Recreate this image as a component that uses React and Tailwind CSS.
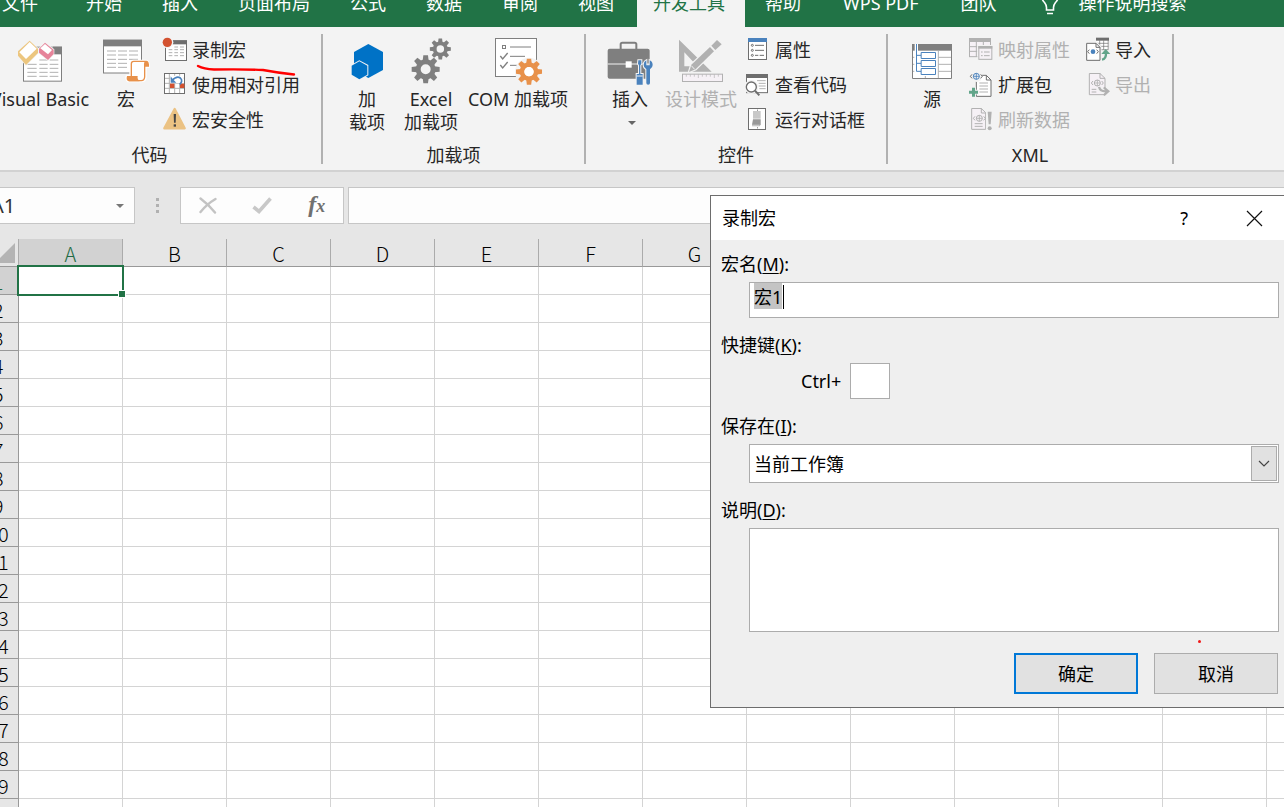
import { useEffect, useRef } from "react";

const GRAY = "#7f7f7f";
const DARK = "#6e6e6e";
const DIM = "#b1b1b1";
const BLUE = "#4a82bd";

function Svg({ w, h, box, children }) {
  return (
    <svg width={w} height={h} viewBox={box} fill="none" className="shrink-0" aria-hidden="true">
      {children}
    </svg>
  );
}

function Small({ children }) {
  return (
    <Svg w={26} h={25} box="0 0 78 75">
      {children}
    </Svg>
  );
}

/* ---------- ribbon icons ---------- */

function VisualBasicIcon() {
  return (
    <Svg w={46} h={43} box="0 0 138 129">
      <rect x="19.5" y="21.5" width="114" height="102" fill="#fff" stroke={GRAY} strokeWidth="3" />
      <rect x="108" y="20" width="27" height="23" fill={GRAY} />
      <path d="M67 60h25M98 60h26M31 73h28M67 73h25M98 73h26M31 85h28M67 85h25M98 85h26M31 97h28M67 97h25M98 97h26M31 109h28M67 109h25M98 109h26" stroke={DIM} strokeWidth="3" />
      <path d="M38 2L63 26V39L27 75L3 47V34Z" fill="#ecc67f" stroke="#f3f3f3" strokeWidth="4" paintOrder="stroke" />
      <path d="M38 6L59 26L27 57L7 37Z" fill="#fff" />
      <path d="M84 8L110 29V42L93 60L66 38V26Z" fill="#e6849a" stroke="#f3f3f3" strokeWidth="4" paintOrder="stroke" />
      <path d="M84 12L105 30L93 43L70 25Z" fill="#fff" />
    </Svg>
  );
}

function MacroIcon() {
  return (
    <Svg w={48} h={44} box="0 0 144 132">
      <rect x="4.500" y="4" width="114" height="98" fill="#fff" stroke={GRAY} strokeWidth="3" />
      <rect x="3" y="2" width="117" height="20" fill={GRAY} />
      <path d="M15 36h27M48 36h27M81 36h27M15 48h27M48 48h27M81 48h27M15 61h27M48 61h27M81 61h27M15 73h27M48 73h27M15 85h27M48 85h27" stroke={DIM} strokeWidth="3" />
      <path d="M86 113V72Q86 66 94 66H133Q140 67 139 83H130V116Q129 126 118 126H78Q72 120 75 111H86Z" fill="#fff" stroke="#fff" strokeWidth="8" />
      <path d="M88 112V74Q88 67 95 67H133Q127 70 128 80V114Q127 125 118 125H80" stroke="#e8914a" strokeWidth="4" />
      <path d="M128 83V73Q128 65 135 65Q142 68 141 83Z" fill="#e8914a" />
      <path d="M75 111H107Q105 121 113 127H81Q71 125 75 111Z" fill="#e8914a" />
    </Svg>
  );
}

function RecordIcon() {
  return (
    <Small>
      <rect x="10.500" y="11.500" width="63" height="59" fill="#fff" stroke={DARK} strokeWidth="3" />
      <rect x="31" y="10" width="44" height="12" fill={DARK} />
      <path d="M20 38h11M37 38h11M54 38h12M37 30h11M54 30h12M20 47h11M37 47h11M54 47h12M20 56h11M37 56h11M54 56h12" stroke={DIM} strokeWidth="3" />
      <circle cx="16" cy="16" r="18" fill="#f3f3f3" />
      <circle cx="16" cy="16" r="14" fill="#d35230" />
    </Small>
  );
}

function RelativeIcon() {
  return (
    <Small>
      <rect x="7.500" y="4.500" width="60" height="60" fill="#fff" />
      <path d="M22 5V64M38 5V64M53 5V64M8 19H67M8 34H67M8 49H67" stroke={DIM} strokeWidth="3" />
      <rect x="7.500" y="4.500" width="60" height="60" stroke={DARK} strokeWidth="3" />
      <path d="M26 11H58L66 20V34H24Z" fill="#fff" />
      <rect x="24" y="35" width="13" height="13" fill="#d35230" />
      <rect x="54" y="35" width="13" height="13" fill="#d35230" />
      <path d="M30 25Q45 10 55 18Q64 27 53 37" stroke={BLUE} strokeWidth="5" />
      <path d="M26 13V32H43L38 27L32 21Z" fill={BLUE} />
    </Small>
  );
}

function WarningIcon() {
  return (
    <Small>
      <path d="M38 6L68 64H7Z" fill="#ebc283" stroke="#ebc283" strokeWidth="7" strokeLinejoin="round" />
      <path d="M35 21H42L41 47H36Z" fill="#444" />
      <rect x="35" y="52" width="7" height="7" fill="#444" />
    </Small>
  );
}

function AddInIcon() {
  return (
    <Svg w={33} h={37} box="0 0 99 111">
      <path d="M52 3L96 27V81L52 105L9 81V27Z" fill="#0072c6" />
      <path d="M25 55L49 68V95L25 109L2 95V68Z" fill="#0072c6" stroke="#f3f3f3" strokeWidth="6" paintOrder="stroke" />
    </Svg>
  );
}

const TEETH = [0, 45, 90, 135, 180, 225, 270, 315];

function Gear({ cx, cy, s, fill, halo }) {
  return (
    <g transform={`translate(${cx} ${cy}) scale(${s})`}>
      {halo && <circle r="45" fill="#f3f3f3" />}
      {TEETH.map((a) => (
        <path key={a} d="M-9 -26L-7 -42H7L9 -26Z" fill={fill} transform={`rotate(${a})`} />
      ))}
      <circle r="22.500" stroke={fill} strokeWidth="15" />
      {halo && <circle r="15" fill="#fff" />}
    </g>
  );
}

function ExcelAddInIcon() {
  return (
    <Svg w={41} h={46} box="0 0 123 138">
      <Gear cx={44} cy={94} s={1} fill={GRAY} />
      <Gear cx={88} cy={33} s={0.75} fill={GRAY} />
    </Svg>
  );
}

function ComIcon() {
  return (
    <Svg w={49} h={48} box="0 0 147 144">
      <rect x="4.500" y="4.500" width="123" height="114" fill="#fff" stroke={GRAY} strokeWidth="3" />
      <rect x="25.500" y="25.500" width="9" height="9" stroke={GRAY} strokeWidth="3" />
      <path d="M48 30H111M48 58H93M48 85H70" stroke={GRAY} strokeWidth="3" />
      <path d="M19 57L26 66L41 48M19 84L26 93L41 75" stroke={GRAY} strokeWidth="4" />
      <Gear cx={105} cy={104} s={0.93} fill="#e8914a" halo />
    </Svg>
  );
}

function InsertIcon() {
  return (
    <Svg w={47} h={50} box="0 -15 141 150">
      <path d="M41 24V10Q41 5 46 5H83Q88 5 88 10V24" stroke={GRAY} strokeWidth="6" />
      <rect x="2" y="23" width="126" height="90" rx="6" fill={GRAY} />
      <path d="M2 69H128" stroke="#f3f3f3" strokeWidth="3" />
      <rect x="56" y="61" width="18" height="19" fill="#fff" />
      <path d="M94 58h9v10l-3 5v26h7v32h-18v-32h7v-26l-3-5z" fill={BLUE} stroke="#f3f3f3" strokeWidth="6" paintOrder="stroke" />
      <path d="M89 105H107" stroke="#f3f3f3" strokeWidth="3" />
      <path d="M118 58V73H128V58Q137 62 137 72Q137 80 129 85V126Q129 131 123.500 131Q118 131 118 126V85Q110 80 110 72Q110 62 118 58Z" fill={BLUE} stroke="#f3f3f3" strokeWidth="6" paintOrder="stroke" />
    </Svg>
  );
}

function DesignIcon() {
  return (
    <Svg w={46} h={44} box="0 0 138 132">
      <path d="M3 2V98H101ZM19 40L58 82H19Z" fill={DIM} fillRule="evenodd" />
      <path d="M33 99L40 77L96 24L108 37L53 91Z" fill={DIM} stroke="#f3f3f3" strokeWidth="7" paintOrder="stroke" />
      <path d="M100 20L117 3L131 16L112 33Z" fill={DIM} stroke="#f3f3f3" strokeWidth="5" paintOrder="stroke" />
      <path d="M40 80L50 91" stroke="#f3f3f3" strokeWidth="3" />
      <rect x="13.500" y="105.500" width="120" height="22" fill="#f6f1f6" stroke={DIM} strokeWidth="3" />
      <path d="M25 106v7M37 106v7M49 106v7M61 106v11M73 106v7M85 106v7M97 106v7M109 106v11M121 106v7" stroke={DIM} strokeWidth="2" />
    </Svg>
  );
}

function PropertiesIcon() {
  return (
    <Small>
      <rect x="10.500" y="4.500" width="54" height="63" fill="#fff" stroke={DARK} strokeWidth="3" />
      <rect x="9" y="3" width="57" height="12" fill={BLUE} />
      <g stroke={DARK} strokeWidth="3">
        <circle cx="22" cy="25" r="3" />
        <circle cx="22" cy="40" r="3" />
        <circle cx="22" cy="55" r="3" />
        <path d="M30 25H57M30 40H57M30 55H40M44 55H57" />
      </g>
    </Small>
  );
}

function ViewCodeIcon() {
  return (
    <Small>
      <rect x="4.500" y="8" width="63" height="54" fill="#fff" stroke={DARK} strokeWidth="3" />
      <rect x="3" y="6" width="66" height="12" fill={DARK} />
      <path d="M36 26H62M41 34H62M41 42H62M43 50H62" stroke={DIM} strokeWidth="3" />
      <circle cx="19" cy="45" r="21" fill="#f3f3f3" />
      <path d="M30 56L43 70" stroke={DARK} strokeWidth="6" />
      <circle cx="19" cy="45" r="15" fill="#fff" stroke={DARK} strokeWidth="4" />
    </Small>
  );
}

function RunDialogIcon() {
  return (
    <Small>
      <rect x="10.500" y="4.500" width="51" height="63" fill="#fff" stroke={DARK} strokeWidth="3" />
      <rect x="24" y="12" width="23" height="23" fill="#c8c8c8" />
      <path d="M24 37H47V53L44 57H21V53Z" fill="#999" />
      <rect x="21" y="53" width="23" height="5" fill="#c8c8c8" />
      <rect x="36" y="8" width="3" height="3" fill={DARK} />
      <rect x="36" y="61" width="3" height="3" fill={DARK} />
    </Small>
  );
}

function SourceIcon() {
  return (
    <Svg w={42} h={37} box="0 0 126 111">
      <rect x="4.500" y="4" width="117" height="103" fill="#fff" />
      <path d="M82 24V106M82 43H121M82 64H121M82 85H121M43 99V106M4 43H10M4 64H10M4 85H10" stroke={DIM} strokeWidth="3" />
      <path d="M4.500 3V106.500H121.500V3" stroke={GRAY} strokeWidth="3" />
      <rect x="3" y="3" width="120" height="20" fill={GRAY} />
      <rect x="11" y="3" width="10" height="21" fill="#fff" />
      <path d="M16.500 3V85H30M16.500 37H30M16.500 61H30" stroke={BLUE} strokeWidth="3" />
      <path d="M30.500 28.500h43v18h-43zM30.500 52.500h43v18h-43zM30.500 76.500h43v18h-43z" stroke={BLUE} strokeWidth="3" fill="#fff" />
    </Svg>
  );
}

function MapIcon() {
  return (
    <Small>
      <rect x="4.500" y="5" width="63" height="54" fill="#f6f1f6" stroke={DIM} strokeWidth="3" />
      <path d="M25 12V59M46 12V28M4 29H28M4 43H28" stroke={DIM} strokeWidth="3" />
      <rect x="3" y="3" width="66" height="12" fill={DIM} />
      <rect x="28" y="24" width="46" height="46" fill="#f3f3f3" />
      <rect x="32.500" y="29" width="39" height="38" fill="#f6f1f6" stroke={DIM} strokeWidth="3" />
      <rect x="31" y="27" width="42" height="8" fill={DIM} />
      <path d="M39 45h5M48 45h17M39 56h5M48 56h17" stroke={DIM} strokeWidth="3" />
    </Small>
  );
}

function Globe({ cx, cy, color, edge }) {
  return (
    <g transform={`translate(${cx} ${cy})`}>
      <circle r="9" stroke={color} strokeWidth="3" />
      <path d="M-9 0H9M0 -9V9" stroke={color} strokeWidth="2.500" />
      <path d="M-13 -6L-18 0L-13 6M13 -6L18 0L13 6" stroke={edge} strokeWidth="3" />
    </g>
  );
}

function ExpansionIcon() {
  return (
    <Svg w={26} h={26} box="0 0 78 78">
      <path d="M25 10H55L69 24V73H25Z" fill="#fff" stroke={DARK} strokeWidth="3" />
      <path d="M55 10V24H69" stroke={DARK} strokeWidth="3" />
      <path d="M34 33H60M34 42H60M34 51H60M34 60H60" stroke={DIM} strokeWidth="3" />
      <circle cx="26" cy="13" r="17" fill="#f3f3f3" />
      <Globe cx={25} cy={13} color={BLUE} edge={DARK} />
      <path d="M12 47H21V56H30V65H21V74H12V65H3V56H12Z" fill="#62a58a" stroke="#f3f3f3" strokeWidth="5" paintOrder="stroke" />
    </Svg>
  );
}

function RefreshIcon() {
  return (
    <Small>
      <path d="M11 4.500H40L53 17V67H11Z" fill="#f6f1f6" stroke={DIM} strokeWidth="3" />
      <path d="M40 4V18H53" stroke={DIM} strokeWidth="3" />
      <Globe cx={34} cy={34} color={DIM} edge={DIM} />
      <path d="M20 50H44M20 58H44" stroke={DIM} strokeWidth="3" />
      <rect x="54" y="10" width="20" height="62" fill="#f3f3f3" />
      <path d="M59 14H71L68 52H62Z" fill={DIM} />
      <circle cx="65" cy="64" r="6" fill={DIM} />
    </Small>
  );
}

function ImportIcon() {
  return (
    <Small>
      <rect x="34" y="3" width="36" height="36" fill="#fff" />
      <path d="M44 10V38M56 10V38M69.500 4V38M34 19H70M34 28H70M34 38H70" stroke={DARK} strokeWidth="2" />
      <rect x="33" y="2" width="39" height="9" fill={DARK} />
      <path d="M5 19H33L45 31V70H5Z" fill="#fff" stroke="#f3f3f3" strokeWidth="9" />
      <path d="M5 19H33L45 31V70H5Z" fill="#fff" stroke={DARK} strokeWidth="3" />
      <path d="M33 19V31H45" stroke={DARK} strokeWidth="3" />
      <circle cx="24" cy="44" r="7" fill={BLUE} />
      <path d="M13 38L8 44L13 50M35 38L40 44L35 50" stroke={DARK} strokeWidth="3" />
      <path d="M50 67Q63 65 63 45" stroke="#f3f3f3" strokeWidth="14" />
      <path d="M51 68Q64 66 63 46" stroke="#62a58a" strokeWidth="7" />
      <path d="M49 51L62 36L76 51Z" fill="#62a58a" />
    </Small>
  );
}

function ExportIcon() {
  return (
    <Small>
      <path d="M13 4.500H45L60 19V68H13Z" fill="#f6f1f6" stroke={DIM} strokeWidth="3" />
      <path d="M45 4V19H60" stroke={DIM} strokeWidth="3" />
      <Globe cx={37} cy={33} color={DIM} edge={DIM} />
      <path d="M20 52H34M20 60H34" stroke={DIM} strokeWidth="3" />
      <path d="M42 46Q48 59 64 58" stroke="#f3f3f3" strokeWidth="16" />
      <path d="M42 45Q46 59 64 58" stroke={DIM} strokeWidth="7" />
      <path d="M59 44L75 58L59 72L54 68L63 58L54 48Z" fill={DIM} />
    </Small>
  );
}

/* ---------- ribbon ---------- */

function Tab({ children, className = "px-5 text-white" }) {
  return (
    <button type="button" className={`flex h-12 shrink-0 items-center whitespace-nowrap ${className}`}>
      {children}
    </button>
  );
}

function TabBar() {
  return (
    <nav className="flex h-[27px] shrink-0 items-end overflow-hidden bg-[#217346]">
      <Tab className="pr-7 pl-0.5 text-white">文件</Tab>
      <Tab>开始</Tab>
      <Tab>插入</Tab>
      <Tab>页面布局</Tab>
      <Tab>公式</Tab>
      <Tab>数据</Tab>
      <Tab>审阅</Tab>
      <Tab>视图</Tab>
      <Tab className="ml-[3px] bg-[#f3f3f3] pr-5 pl-4 text-[#217346]">开发工具</Tab>
      <Tab>帮助</Tab>
      <Tab className="pr-[22px] pl-[22px] text-white">WPS PDF</Tab>
      <Tab>团队</Tab>
      <Tab className="gap-5 pl-6 text-white">
        <Svg w={18} h={27} box="0 0 18 27">
          <path d="M5.500 20V17.500Q5.500 15 3.500 12.500Q1 10 1 7.500Q1 1 9 1Q17 1 17 7.500Q17 10 14.500 12.500Q12.500 15 12.500 17.500V20ZM6 23.500H12" stroke="#fff" strokeWidth="1.600" />
        </Svg>
        操作说明搜索
      </Tab>
    </nav>
  );
}

function Big({ icon, children, className, disabled, menu }) {
  return (
    <button
      type="button"
      disabled={disabled}
      className={`flex shrink-0 flex-col items-center pt-1 leading-[23px] whitespace-nowrap disabled:text-[#b1b1b1] ${className}`}
    >
      <span className="mb-0.5 flex h-[50px] items-center">{icon}</span>
      {children}
      {menu && (
        <span className="flex h-[23px] items-center pl-1">
          <Svg w={8} h={4} box="0 0 8 4">
            <path d="M0 0H8L4 4Z" fill="#666" />
          </Svg>
        </span>
      )}
    </button>
  );
}

function Row({ icon, children, disabled }) {
  return (
    <button
      type="button"
      disabled={disabled}
      className="flex h-[35px] items-center gap-1 whitespace-nowrap disabled:text-[#b1b1b1]"
    >
      {icon}
      {children}
    </button>
  );
}

function Group({ label, className, children }) {
  return (
    <section className={`flex shrink-0 flex-col pt-[5px] pb-[3px] ${className}`}>
      <div className="flex h-[111px] items-start">{children}</div>
      <h2 className="text-center leading-6">{label}</h2>
    </section>
  );
}

function Divider() {
  return <div className="mt-[7px] mb-1.5 w-0.5 shrink-0 bg-[#b1b1b1]" />;
}

function Ribbon() {
  return (
    <div className="relative flex shrink-0 overflow-hidden border-b-2 border-[#d2d2d2] bg-[#f3f3f3] text-[#262626]">
      <Group label="代码" className="-ml-[22px] w-[343px]">
        <Big icon={<VisualBasicIcon />} className="ml-2.5 w-[104px]">Visual Basic</Big>
        <Big icon={<MacroIcon />} className="ml-1 w-[60px]">宏</Big>
        <div className="ml-1.5 flex flex-col">
          <Row icon={<RecordIcon />}>录制宏</Row>
          <Row icon={<RelativeIcon />}>使用相对引用</Row>
          <Row icon={<WarningIcon />}>宏安全性</Row>
        </div>
      </Group>
      <Divider />
      <Group label="加载项" className="w-[261px]">
        <Big icon={<AddInIcon />} className="ml-3.5 w-[60px]">
          <span>加</span>
          <span>载项</span>
        </Big>
        <Big icon={<ExcelAddInIcon />} className="ml-0.5 w-16">
          <span>Excel</span>
          <span>加载项</span>
        </Big>
        <Big icon={<ComIcon />} className="ml-0.5 w-[106px]">COM 加载项</Big>
      </Group>
      <Divider />
      <Group label="控件" className="w-[300px]">
        <Big icon={<InsertIcon />} className="ml-3.5 w-[60px]" menu>
          <span>插入</span>
        </Big>
        <Big icon={<DesignIcon />} className="ml-1 w-[74px]" disabled>设计模式</Big>
        <div className="ml-[7px] flex flex-col">
          <Row icon={<PropertiesIcon />}>属性</Row>
          <Row icon={<ViewCodeIcon />}>查看代码</Row>
          <Row icon={<RunDialogIcon />}>运行对话框</Row>
        </div>
      </Group>
      <Divider />
      <Group label="XML" className="w-[284px]">
        <Big icon={<SourceIcon />} className="ml-3.5 w-[60px]">源</Big>
        <div className="ml-1.5 flex flex-col">
          <Row icon={<MapIcon />} disabled>映射属性</Row>
          <Row icon={<ExpansionIcon />}>扩展包</Row>
          <Row icon={<RefreshIcon />} disabled>刷新数据</Row>
        </div>
        <div className="ml-[15px] flex flex-col">
          <Row icon={<ImportIcon />}>导入</Row>
          <Row icon={<ExportIcon />} disabled>导出</Row>
        </div>
      </Group>
      <Divider />
      <svg className="absolute top-9 left-[195px]" width="102" height="14" viewBox="0 0 102 14" fill="none" aria-hidden="true">
        <path d="M3 3Q9 6 19 6.500Q50 6 68 7Q84 10 99 11.500" stroke="#f00" strokeWidth="2.400" strokeLinecap="round" />
      </svg>
    </div>
  );
}

/* ---------- formula bar ---------- */

function FormulaBar() {
  return (
    <div className="flex shrink-0 pt-[15px] pb-[15px]">
      <div className="-ml-2.5 flex h-[37px] w-[145px] shrink-0 items-center border border-[#c6c6c6] bg-[#fdfdfd] pr-2.5">
        <input aria-label="名称框" defaultValue="A1" className="w-full min-w-0 bg-transparent px-0 text-xl text-[#333] outline-none" />
        <button type="button" aria-label="名称列表">
          <Svg w={8} h={4} box="0 0 8 4">
            <path d="M0 0H8L4 4Z" fill="#777" />
          </Svg>
        </button>
      </div>
      <div className="flex w-[45px] shrink-0 flex-col items-center justify-center gap-[3px]">
        <span className="size-[3px] bg-[#b1b1b1]" />
        <span className="size-[3px] bg-[#b1b1b1]" />
        <span className="size-[3px] bg-[#b1b1b1]" />
      </div>
      <div className="flex h-[37px] w-[164px] shrink-0 items-center justify-around border border-[#c6c6c6] bg-[#fdfdfd]">
        <button type="button" aria-label="取消输入">
          <Svg w={18} h={17} box="0 0 18 17">
            <path d="M1.500 1.500Q9 7 16 15.500M16.500 2Q8 7 1.500 15" stroke="#c3c3c3" strokeWidth="2.400" strokeLinecap="round" />
          </Svg>
        </button>
        <button type="button" aria-label="输入">
          <Svg w={20} h={17} box="0 0 20 17">
            <path d="M1.500 10L7 14.500L18.500 1.500" stroke="#c8c8c8" strokeWidth="3.600" />
          </Svg>
        </button>
        <button type="button" className="font-['Liberation_Serif',serif] text-2xl leading-6 font-bold text-[#707070] italic">
          f<span className="text-lg">x</span>
        </button>
      </div>
      <input aria-label="编辑栏" className="ml-1 h-[37px] min-w-0 flex-1 border border-r-0 border-[#c6c6c6] bg-[#fdfdfd] px-2 outline-none" />
    </div>
  );
}

/* ---------- sheet ---------- */

const COLUMNS = "ABCDEFGHIJKLM".split("");
const ROWS = Array.from({ length: 24 }, (_, i) => i + 1);

function Sheet() {
  return (
    <div className="min-h-0 flex-1 overflow-hidden bg-white">
      <table className="-ml-[22px] w-[1393px] table-fixed border-separate border-spacing-0 font-['Noto_Sans_CJK_SC',sans-serif] text-xl leading-[27px] text-black">
        <colgroup>
          <col className="w-[41px]" />
          {COLUMNS.map((c) => (
            <col key={c} className="w-[104px]" />
          ))}
        </colgroup>
        <thead>
          <tr className="h-7">
            <th className="border-r border-b border-r-[#ababab] border-b-[#999] bg-[#e6e6e6] p-0">
              <div className="flex h-[27px] items-end justify-end pr-[3px] pb-[3px]">
                <Svg w={20} h={20} box="0 0 20 20">
                  <path d="M20 0V20H0Z" fill="#b4b4b4" />
                </Svg>
              </div>
            </th>
            {COLUMNS.map((c) => (
              <th
                key={c}
                scope="col"
                className={`border-r border-b border-r-[#ababab] border-b-[#999] p-0 font-light ${c === "A" ? "bg-[#d2d2d2] text-[#1f6b45]" : "bg-[#e6e6e6]"}`}
              >
                <div className="h-[27px] pt-px">{c}</div>
              </th>
            ))}
          </tr>
        </thead>
        <tbody>
          {ROWS.map((r) => (
            <tr key={r} className="h-7">
              <th
                scope="row"
                className={`border-r border-b border-[#999] p-0 font-light ${r === 1 ? "bg-[#d2d2d2] text-[#1f6b45]" : "bg-[#e6e6e6]"}`}
              >
                <div className="h-[27px] pt-px">{r}</div>
              </th>
              {COLUMNS.map((c) => (
                <td key={c} className="relative border-r border-b border-[#d4d4d4] p-0">
                  {r === 1 && c === "A" && (
                    <>
                      <span className="absolute -inset-0.5 z-10 border-2 border-[#217346]" />
                      <span className="absolute -right-1 -bottom-1 z-10 size-2 border border-white bg-[#217346]" />
                    </>
                  )}
                </td>
              ))}
            </tr>
          ))}
        </tbody>
      </table>
    </div>
  );
}

/* ---------- dialog ---------- */

const FIELD = "border border-[#acacac] bg-white outline-none";

function RecordMacroDialog() {
  const nameRef = useRef(null);

  useEffect(() => {
    nameRef.current.focus();
    nameRef.current.select();
  }, []);

  return (
    <div
      role="dialog"
      aria-labelledby="dialog-title"
      className="absolute top-[195px] right-0 left-[710px] z-20 border border-r-0 border-[#6d6d6d] bg-[#efefef] text-black"
    >
      <header className="flex h-11 items-center bg-white pr-[21px] pl-[11px]">
        <h1 id="dialog-title" className="flex-1">录制宏</h1>
        <button type="button" aria-label="帮助" className="mr-[58px]">?</button>
        <button type="button" aria-label="关闭">
          <Svg w={17} h={17} box="0 0 17 17">
            <path d="M1 1L16 16M16 1L1 16" stroke="#111" strokeWidth="1.200" />
          </Svg>
        </button>
      </header>
      <form className="flex flex-col pt-3 pr-[5px] pb-[13px] pl-2.5 leading-6" onSubmit={(e) => e.preventDefault()}>
        <label htmlFor="macro-name">
          宏名(<u className="underline-offset-2">M</u>):
        </label>
        <div className="relative mt-1.5 ml-7 flex">
          <input
            id="macro-name"
            ref={nameRef}
            defaultValue="宏1"
            className={`h-9 w-full pr-1 pb-2 pl-1 leading-6 selection:bg-[#c4c4c4] selection:text-black ${FIELD}`}
          />
          <span className="absolute top-[3px] left-[34px] h-6 w-px bg-black" />
        </div>

        <label htmlFor="shortcut" className="mt-[15px]">
          快捷键(<u className="underline-offset-2">K</u>):
        </label>
        <div className="mt-1.5 ml-20 flex items-center gap-[9px]">
          <span>Ctrl+</span>
          <input id="shortcut" maxLength={1} className={`h-9 w-10 text-center ${FIELD}`} />
        </div>

        <label htmlFor="store" className="mt-[15px]">
          保存在(<u className="underline-offset-2">I</u>):
        </label>
        <div className="relative mt-1.5 ml-7 flex">
          <select id="store" className={`h-[39px] w-full appearance-none pl-1 ${FIELD}`}>
            <option>当前工作簿</option>
            <option>新工作簿</option>
            <option>个人宏工作簿</option>
          </select>
          <span className="pointer-events-none absolute inset-y-0.5 right-0.5 flex w-[26px] items-center justify-center border border-[#acacac] bg-[#e1e1e1]">
            <Svg w={12} h={7} box="0 0 12 7">
              <path d="M1 1L6 6L11 1" stroke="#444" strokeWidth="1.200" />
            </Svg>
          </span>
        </div>

        <label htmlFor="description" className="mt-[15px]">
          说明(<u className="underline-offset-2">D</u>):
        </label>
        <textarea id="description" className={`mt-1.5 ml-7 h-[104px] resize-none p-1 ${FIELD}`} />

        <div className="mt-[21px] mr-px flex justify-end gap-4">
          <button type="submit" className="h-[41px] w-[124px] border-2 border-[#0078d7] bg-[#e1e1e1]">确定</button>
          <button type="button" className="h-[41px] w-[124px] border border-[#acacac] bg-[#e1e1e1]">取消</button>
        </div>
      </form>
      <span className="absolute right-[83px] bottom-16 size-[3px] rounded-full bg-[#f01818]" />
    </div>
  );
}

export default function App() {
  return (
    <div className="relative flex h-screen flex-col overflow-hidden bg-[#e6e6e6] font-['Noto_Sans','Noto_Sans_CJK_SC',sans-serif] text-lg">
      <TabBar />
      <Ribbon />
      <FormulaBar />
      <Sheet />
      <RecordMacroDialog />
    </div>
  );
}
